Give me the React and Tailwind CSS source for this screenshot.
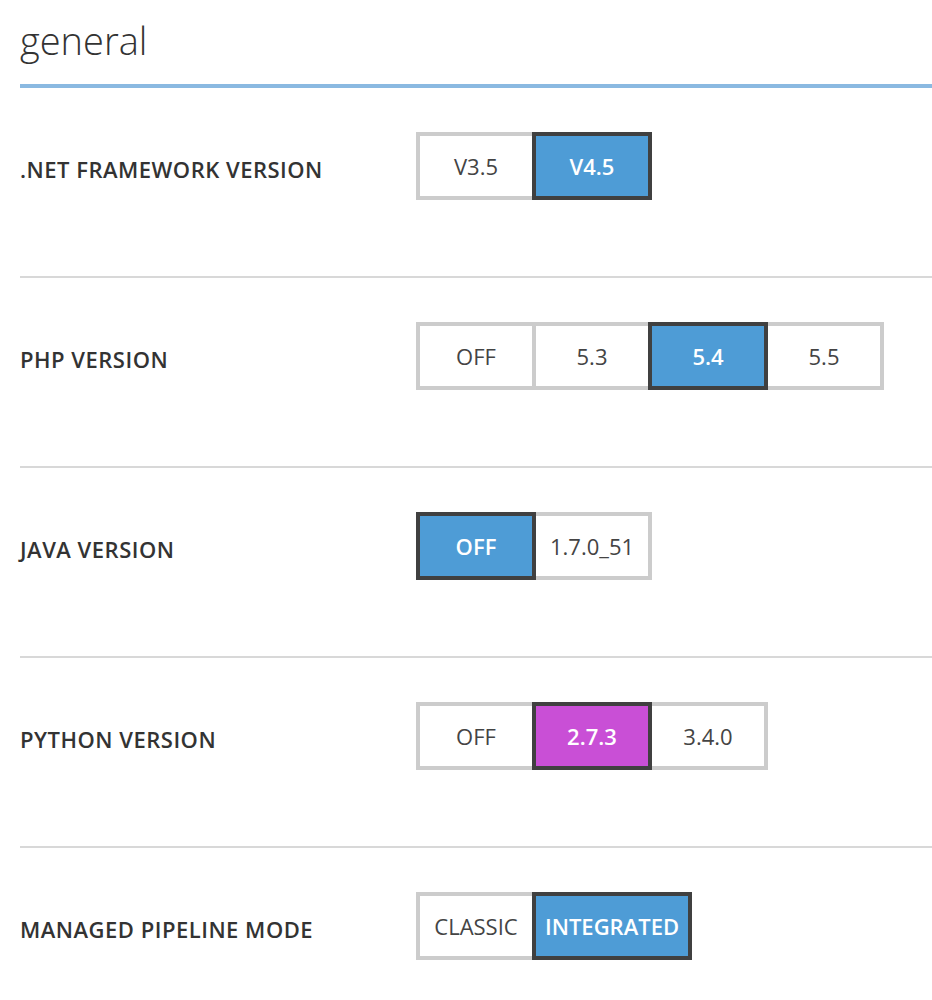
import React, { useState } from 'react';

const settings = [
  { label: '.NET FRAMEWORK VERSION', options: ['V3.5', 'V4.5'], selected: 'V4.5' },
  { label: 'PHP VERSION', options: ['OFF', '5.3', '5.4', '5.5'], selected: '5.4' },
  { label: 'JAVA VERSION', options: ['OFF', '1.7.0_51'], selected: 'OFF' },
  { label: 'PYTHON VERSION', options: ['OFF', '2.7.3', '3.4.0'], selected: '2.7.3', accent: 'purple' },
  { label: 'MANAGED PIPELINE MODE', options: ['CLASSIC', 'INTEGRATED'], selected: 'INTEGRATED' },
];

const Toggle = ({ options, value, accent, onChange }) => (
  <div className="flex">
    {options.map((opt, i) => {
      const on = opt === value;
      return (
        <button
          key={opt}
          type="button"
          onClick={() => onChange(opt)}
          className={`relative h-[68px] min-w-[120px] px-[9px] border-4 text-[22px] leading-none ${i > 0 ? '-ml-[4px]' : ''} ${
            on
              ? `z-10 border-[#404040] text-white font-semibold ${accent === 'purple' ? 'bg-[#c94fd6]' : 'bg-[#4e9cd6]'}`
              : 'border-[#cccccc] bg-white text-[#444444]'
          }`}
        >
          {opt}
        </button>
      );
    })}
  </div>
);

export default function App() {
  const [values, setValues] = useState(settings.map((s) => s.selected));

  return (
    <div className="min-h-screen bg-white pl-5 font-['Open_Sans',sans-serif]">
      <h1 className="pt-[17px] pb-[21px] text-[38px] font-light leading-[46px] text-[#333333]">general</h1>
      <div className="h-[4px] bg-[#8ab9e1]" />

      {settings.map((s, idx) => (
        <div key={s.label} className={`flex items-start pt-[44px] ${idx > 0 ? 'h-[190px] border-t-2 border-[#d8d8d8]' : 'h-[188px]'}`}>
          <div className="w-[396px] pt-[21px] text-[22px] font-semibold tracking-[0.5px] text-[#333333]">{s.label}</div>
          <Toggle
            options={s.options}
            value={values[idx]}
            accent={s.accent}
            onChange={(v) => setValues(values.map((x, j) => (j === idx ? v : x)))}
          />
        </div>
      ))}
    </div>
  );
}
